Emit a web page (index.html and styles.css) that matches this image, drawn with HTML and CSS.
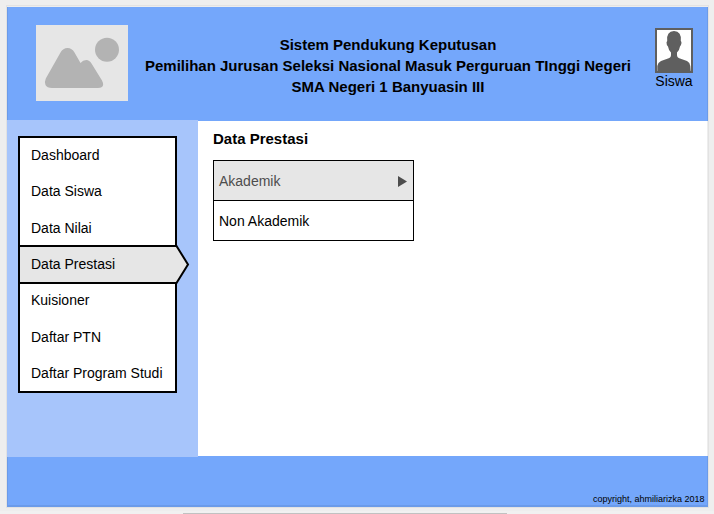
FILE: index.html
```html
<!DOCTYPE html>
<html lang="id">
<head>
<meta charset="utf-8">
<title>Data Prestasi</title>
<link rel="stylesheet" href="styles.css">
</head>
<body>
<div class="frame">
  <header class="header">
    <svg class="logo" viewBox="0 0 92 76">
      <rect width="92" height="76" fill="#e6e6e6"/>
      <circle cx="71" cy="24.800" r="12" fill="#b3b3b3"/>
      <path d="M9.800 53.500L24.500 27.500Q27 23 31.500 23Q36 23 38.500 27.500L44.500 38Q47 35 50.300 35Q53.500 35 55.500 38.500L66 55.500Q68.500 60.500 65.500 62.300Q64.500 63 62 63H16Q11 63 9.500 60Q8.200 57 9.800 53.500Z" fill="#b3b3b3"/>
    </svg>
    <h1 class="title">Sistem Pendukung Keputusan<br>Pemilihan Jurusan Seleksi Nasional Masuk Perguruan TInggi Negeri<br>SMA Negeri 1 Banyuasin III</h1>
    <div class="user">
      <svg class="avatar" viewBox="0 0 38 45">
        <rect x="1" y="1" width="36" height="43" fill="#fff" stroke="#5f5f5f" stroke-width="2"/>
        <path d="M2.300 43V38Q2.800 34.500 6 33L13 30.500Q16 29.500 16 27V24.500Q13.500 22 13 18.500Q11.500 17.500 11.500 14.500Q11.700 13.500 12.200 13Q11.200 3.300 19 3Q26.800 3.300 25.800 13Q26.500 13.500 26.500 15Q26 18 25 18.500Q24.500 22 22 24.500V27Q22 29.500 25 30.500L32 33Q35 34.500 35.300 38L35.700 43Z" fill="#5f5f5f"/>
      </svg>
      <span class="user-name">Siswa</span>
    </div>
  </header>
  <div class="body">
    <aside class="sidebar">
      <nav class="menu">
        <a class="item">Dashboard</a>
        <a class="item">Data Siswa</a>
        <a class="item">Data Nilai</a>
        <a class="item active">Data Prestasi
          <svg class="pointer" viewBox="0 0 15 39"><path d="M0 2H2L13 19.500L2 37H0Z" fill="#e6e6e6"/><path d="M0 1H1.500L13 19.500L1.500 38H0" fill="none" stroke="#000" stroke-width="2"/></svg>
        </a>
        <a class="item">Kuisioner</a>
        <a class="item">Daftar PTN</a>
        <a class="item">Daftar Program Studi</a>
      </nav>
    </aside>
    <main class="content">
      <h2 class="heading">Data Prestasi</h2>
      <div class="options">
        <div class="option selected">Akademik <svg class="arrow" viewBox="0 0 9 11"><path d="M0 0L9 5.500L0 11Z" fill="#4d4d4d"/></svg></div>
        <div class="option">Non Akademik</div>
      </div>
    </main>
  </div>
  <footer class="footer">copyright, ahmiliarizka 2018</footer>
</div>
<div class="scrollbar"><div class="thumb"></div></div>
</body>
</html>
```
FILE: styles.css
```css
* { box-sizing: border-box; }
body {
  margin: 0;
  height: 514px;
  overflow: hidden;
  display: flex;
  flex-direction: column;
  background: #eee;
  color: #000;
  font: 14px/20px "Liberation Sans", Arial, sans-serif;
}
.frame {
  position: relative;
  width: 701px;
  height: 501px;
  margin: 6px 0 0 7px;
  padding-top: 1px;
  background: #fff;
  display: flex;
  flex-direction: column;
  box-shadow: 0 0 0 1px #e2e2e2;
}
.frame::after {
  content: "";
  position: absolute;
  inset: 0;
  border: solid rgba(0, 0, 0, 0.07);
  border-width: 1px 1px 2px 1px;
}
.header {
  height: 114px;
  flex: none;
  display: flex;
  align-items: flex-start;
  background: #74a7fb;
}
.logo { width: 92px; height: 76px; margin: 18px 0 0 29px; }
.title {
  width: 520px;
  margin: 27px 0 0;
  font-size: 15px;
  line-height: 21px;
  text-align: center;
}
.user {
  width: 38px;
  margin: 21px 0 0 7px;
  display: flex;
  flex-direction: column;
  align-items: center;
}
.avatar { width: 38px; height: 45px; }
.user-name { line-height: 16px; }
.body { display: flex; height: 335px; flex: none; }
.sidebar {
  position: relative;
  width: 191px;
  height: 337px;
  margin-top: -1px;
  padding: 16px 11px;
  z-index: 1;
  background: #a7c5fb;
}
.menu {
  width: 159px;
  height: 257px;
  display: flex;
  flex-direction: column;
  border: 2px solid #000;
  background: #fff;
}
.item {
  position: relative;
  flex: none;
  height: 36.35px;
  display: flex;
  align-items: center;
  padding-left: 11px;
}
.item:first-child { margin-top: -1.2px; }
.item.active {
  height: 39px;
  margin: -0.85px 0 -1.8px;
  padding-bottom: 1px;
  border: solid #000;
  border-width: 2px 0;
  background: #e6e6e6;
}
.pointer {
  position: absolute;
  left: 155px;
  top: -2px;
  width: 15px;
  height: 39px;
}
.content { padding: 8px 15px; }
.heading { margin: 0; font-size: 15px; line-height: 20px; }
.options {
  width: 201px;
  margin-top: 11px;
  border: 1px solid #000;
}
.option {
  height: 39px;
  padding: 0 6px 0 5px;
  display: flex;
  align-items: center;
  justify-content: space-between;
}
.option.selected {
  height: 40px;
  border-bottom: 1px solid #000;
  background: #e6e6e6;
  color: #4d4d4d;
}
.arrow { width: 9px; height: 11px; margin-top: 1px; }
.footer {
  flex: 1;
  display: flex;
  align-items: flex-end;
  justify-content: flex-end;
  padding: 0 3.5px 2px 0;
  background: #74a7fb;
  font-size: 9px;
  line-height: 12px;
}
.scrollbar {
  flex: 1;
  margin-top: 4px;
  padding: 2px 207px 0 183px;
  background: #f1f1f1;
}
.thumb { height: 1px; background: #c1c1c1; }
```
